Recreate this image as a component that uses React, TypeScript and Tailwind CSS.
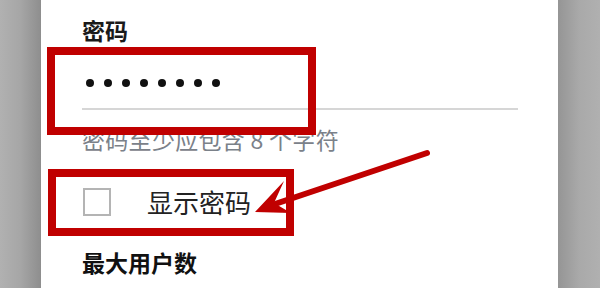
import React from "react";

export default function App() {
  const dots = Array.from({ length: 8 });
  return (
    <div
      className="relative flex w-[600px] h-[288px] overflow-hidden"
      style={{ fontFamily: '"Noto Sans CJK SC", "Noto Sans", sans-serif' }}
    >
      <div className="w-[41px] h-full bg-gradient-to-r from-[#b1b1b1] via-[#a6a6a6] to-[#8e8e8e]" />
      <div className="flex-1 h-full bg-white pl-[41px] pr-[40px] flex flex-col">
        <div className="mt-[18px] text-[23px] leading-[24px] font-bold text-[#1a1a1a]">密码</div>
        <div className="mt-[37px] ml-[4px] flex gap-[10px]">
          {dots.map((_, i) => (
            <div key={i} className="w-[8px] h-[8px] rounded-full bg-[#111]" />
          ))}
        </div>
        <div className="mt-[21px] h-[2px] bg-[#d6d6d6]" />
        <div className="mt-[18px] text-[23px] leading-[23px] tracking-[0.3px] text-[#7b8189] whitespace-nowrap">
          密码至少应包含 8 个字符
        </div>
        <div className="mt-[37px] flex items-center">
          <div className="w-[28px] h-[28px] border-2 border-[#b4b4b4] ml-[1px]" />
          <div className="ml-[36px] text-[26px] leading-[28px] text-[#222]">显示密码</div>
        </div>
        <div className="mt-[34px] text-[23px] leading-[24px] font-bold text-[#111]">最大用户数</div>
      </div>
      <div className="w-[42px] h-full bg-gradient-to-r from-[#959595] via-[#a9a9a9] to-[#b0b0b0]" />
      <svg
        className="absolute inset-0 pointer-events-none"
        width="600"
        height="288"
        viewBox="0 0 600 288"
      >
        <rect x="51" y="51" width="261" height="80" fill="none" stroke="#c00000" strokeWidth="8" />
        <rect x="52" y="173" width="238" height="59" fill="none" stroke="#c00000" strokeWidth="8" />
        <line x1="427" y1="153" x2="272" y2="205" stroke="#c00000" strokeWidth="6" strokeLinecap="round" />
        <polygon points="255,212 284,181 274,203 291,213" fill="#c00000" />
      </svg>
    </div>
  );
}
